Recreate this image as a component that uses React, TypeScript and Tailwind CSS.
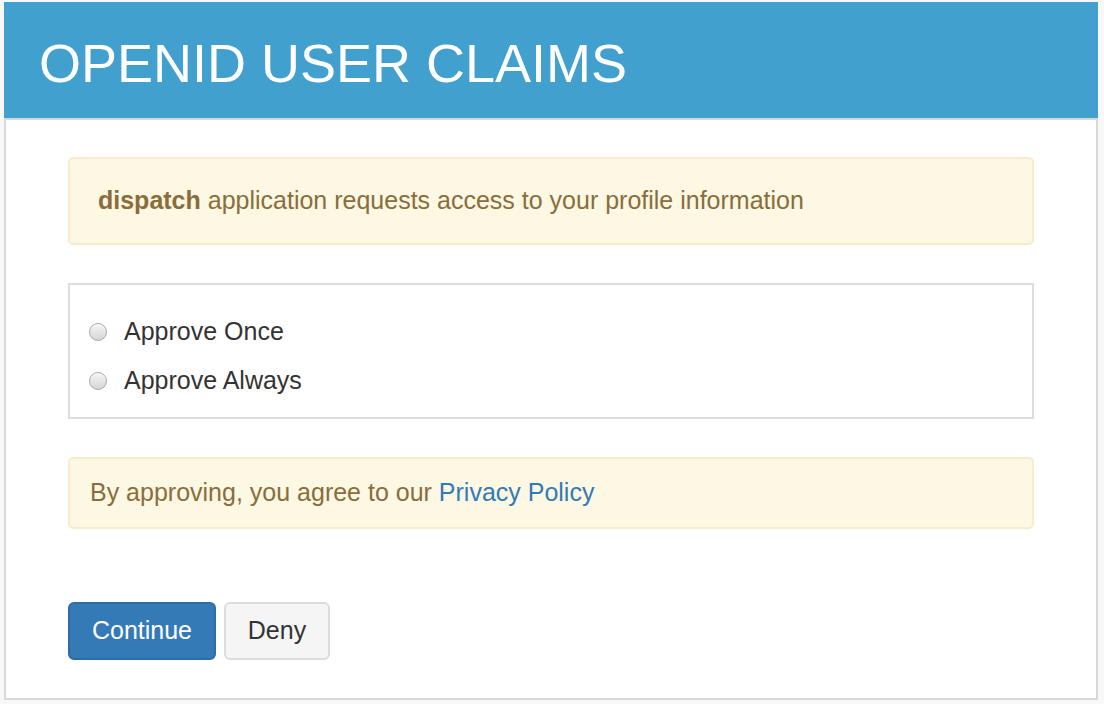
import { useState } from 'react'

const font = { fontFamily: '"Liberation Sans", Arial, Helvetica, sans-serif' }

function Radio({ label, checked, onClick }: { label: string; checked: boolean; onClick: () => void }) {
  return (
    <label className="flex items-center h-[49px] cursor-pointer" onClick={onClick}>
      <span className="w-[18px] h-[18px] rounded-full border border-[#a9a9a9] bg-gradient-to-b from-[#f4f4f4] to-[#d6d6d6] shadow-[inset_0_1px_1px_rgba(255,255,255,0.8)] flex items-center justify-center ml-[19px] mr-[17px]">
        {checked && <span className="w-[8px] h-[8px] rounded-full bg-[#333]"></span>}
      </span>
      <span className="text-[25px] text-[#333] leading-none">{label}</span>
    </label>
  )
}

export default function App() {
  const [choice, setChoice] = useState('')

  return (
    <div className="min-h-screen bg-[#f8f8f8] pt-[2px] pl-[4px]" style={font}>
      <div className="w-[1094px]">
        {/* header */}
        <div className="h-[116px] bg-[#42a0cf] flex items-center pl-[35px]">
          <h1 className="text-white text-[54px] leading-none font-normal mt-[5px]">OPENID USER CLAIMS</h1>
        </div>

        {/* panel */}
        <div className="h-[582px] bg-white border-2 border-[#d9d9d9] px-[62px] pt-[37px]">
          <div className="h-[88px] rounded-[5px] border-2 border-[#faebcc] bg-[#fcf8e3] flex items-center pl-[28px] text-[25px] text-[#8a6d3b]">
            <span><b>dispatch</b> application requests access to your profile information</span>
          </div>

          <div className="mt-[38px] h-[136px] border-2 border-[#dddddd] pt-[22px]">
            <Radio label="Approve Once" checked={choice === 'once'} onClick={() => setChoice('once')} />
            <Radio label="Approve Always" checked={choice === 'always'} onClick={() => setChoice('always')} />
          </div>

          <div className="mt-[38px] h-[72px] rounded-[5px] border-2 border-[#faebcc] bg-[#fcf8e3] flex items-center pl-[20px] text-[25px] text-[#8a6d3b]">
            <span>By approving, you agree to our <a href="#" className="text-[#337ab7]">Privacy Policy</a></span>
          </div>

          <div className="mt-[73px] flex gap-[8px]">
            <button className="h-[58px] w-[148px] rounded-[6px] bg-[#337ab7] border-2 border-[#2e6da4] text-white text-[25px]">Continue</button>
            <button className="h-[58px] w-[106px] rounded-[6px] bg-[#f5f5f5] border-2 border-[#dcdcdc] text-[#333] text-[25px]">Deny</button>
          </div>
        </div>
      </div>
    </div>
  )
}
